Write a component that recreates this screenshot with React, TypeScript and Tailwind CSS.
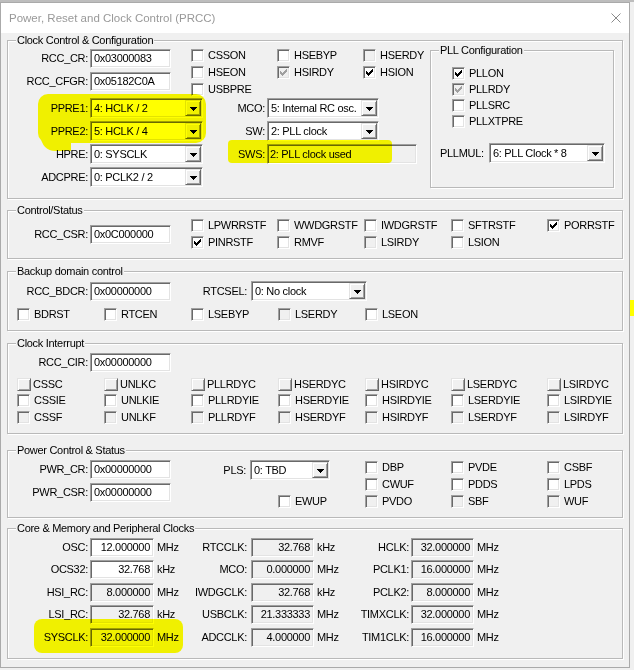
import React from "react";

type CbState = "off" | "on" | "dis" | "disOn" | "btn";

const sunken =
  "border border-t-[#a0a0a0] border-l-[#a0a0a0] border-b-white border-r-white shadow-[inset_1px_1px_0_#696969,inset_-1px_-1px_0_#e3e3e3]";
const raised =
  "border border-t-[#e3e3e3] border-l-[#e3e3e3] border-b-[#696969] border-r-[#696969] shadow-[inset_1px_1px_0_#fff,inset_-1px_-1px_0_#a0a0a0]";

function Tick({ color }: { color: string }) {
  return (
    <svg width="7" height="7" viewBox="0 0 7 7" shapeRendering="crispEdges" fill={color}>
      <path d="M6 0h1v1H6z M5 1h2v1H5z M0 2h1v1H0z M4 2h3v1H4z M0 3h2v1H0z M3 3h3v1H3z M0 4h5v1H0z M1 5h3v1H1z M2 6h1v1H2z" />
    </svg>
  );
}

function Check({ label, s = "off", w = "" }: { label: string; s?: CbState; w?: string }) {
  return (
    <div className={`flex items-center h-[13px] shrink-0 ${w}`}>
      {s === "btn" ? (
        <span className={`w-[14px] h-[13px] shrink-0 bg-[#f0f0f0] ${raised}`} />
      ) : (
        <span
          className={`w-[13px] h-[13px] shrink-0 flex items-center justify-center ${sunken} ${
            s === "off" || s === "on" ? "bg-white" : "bg-[#f0f0f0]"
          }`}
        >
          {s === "on" && <Tick color="#000" />}
          {s === "disOn" && <Tick color="#a0a0a0" />}
        </span>
      )}
      <span className={`whitespace-nowrap ${s === "btn" ? "ml-[2px]" : "ml-[4px]"}`}>{label}</span>
    </div>
  );
}

function Edit({ v, w, gray, right }: { v: string; w: string; gray?: boolean; right?: boolean }) {
  return (
    <div
      className={`${w} h-[19px] shrink-0 ${sunken} ${gray ? "bg-[#f0f0f0]" : "bg-white"} flex items-center px-[3px] whitespace-nowrap ${
        right ? "justify-end" : ""
      }`}
    >
      {v}
    </div>
  );
}

function Combo({ v, w }: { v: string; w: string }) {
  return (
    <div className={`${w} h-[20px] shrink-0 p-[1px] ${sunken} bg-white flex items-center`}>
      <span className="flex-1 pl-[2px] whitespace-nowrap overflow-hidden">{v}</span>
      <span className={`w-[16px] h-[16px] shrink-0 bg-[#f0f0f0] ${raised} flex items-center justify-center`}>
        <svg width="7" height="4" viewBox="0 0 7 4" shapeRendering="crispEdges" className="mt-[1px]">
          <path d="M0 0h7v1H0z M1 1h5v1H1z M2 2h3v1H2z M3 3h1v1H3z" fill="#000" />
        </svg>
      </span>
    </div>
  );
}

function Lbl({ t, w, mr = "mr-[2px]" }: { t: string; w: string; mr?: string }) {
  return <span className={`${w} ${mr} shrink-0 text-right whitespace-nowrap`}>{t}</span>;
}

function Group({ title, className = "", children }: { title: string; className?: string; children?: React.ReactNode }) {
  return (
    <div className={`relative border border-[#b9b9b9] shadow-[inset_1px_1px_0_#fff,1px_1px_0_#fff] ${className}`}>
      <span className="absolute left-[8px] -top-[7px] px-[1px] bg-[#f0f0f0] leading-[13px] whitespace-nowrap">
        {title}
      </span>
      {children}
    </div>
  );
}

const clocks: [string, string, string, boolean][][] = [
  [
    ["OSC:", "12.000000", "MHz", false],
    ["RTCCLK:", "32.768", "kHz", true],
    ["HCLK:", "32.000000", "MHz", true],
  ],
  [
    ["OCS32:", "32.768", "kHz", false],
    ["MCO:", "0.000000", "MHz", true],
    ["PCLK1:", "16.000000", "MHz", true],
  ],
  [
    ["HSI_RC:", "8.000000", "MHz", true],
    ["IWDGCLK:", "32.768", "kHz", true],
    ["PCLK2:", "8.000000", "MHz", true],
  ],
  [
    ["LSI_RC:", "32.768", "kHz", true],
    ["USBCLK:", "21.333333", "MHz", true],
    ["TIMXCLK:", "32.000000", "MHz", true],
  ],
  [
    ["SYSCLK:", "32.000000", "MHz", true],
    ["ADCCLK:", "4.000000", "MHz", true],
    ["TIM1CLK:", "16.000000", "MHz", true],
  ],
];
const rowGaps = ["", "mt-[3px]", "mt-[4px]", "mt-[3px]", "mt-[4px]"];

const cirCols = ["w-[87px]", "w-[87px]", "w-[87px]", "w-[87px]", "w-[86px]", "w-[96px]", "w-[60px]"];
const cirNames = ["CSS", "UNLK", "PLLRDY", "HSERDY", "HSIRDY", "LSERDY", "LSIRDY"];

export default function App() {
  return (
    <div className="relative w-[634px] h-[670px] overflow-hidden bg-[#f0f0f0] font-['Liberation_Sans',Arial,sans-serif] text-[11px] leading-[13px] tracking-[-0.3px] text-black">
      <div className="h-[2px] bg-[#bdbdbd]" />
      <div className="w-[630px] h-[666px] border border-[#aaaaaa] bg-[#f0f0f0]">
        {/* title bar */}
        <div className="h-[30px] bg-white flex items-center pl-[8px] pr-[8px] text-[11.5px] tracking-normal text-[#999999]">
          <span>Power, Reset and Clock Control (PRCC)</span>
          <svg className="ml-auto" width="10" height="10" viewBox="0 0 10 10">
            <path d="M0.5 0.5L9.5 9.5M9.5 0.5L0.5 9.5" stroke="#8a8a8a" strokeWidth="1" />
          </svg>
        </div>

        <div className="px-[6px] pt-[7px]">
          {/* Clock Control & Configuration */}
          <Group title="Clock Control & Configuration" className="h-[159px] flex">
            <div className="w-[422px] pt-[8px]">
              <div className="flex h-[49px]">
                <div className="flex flex-col gap-[4px]">
                  <div className="flex items-center">
                    <Lbl t="RCC_CR:" w="w-[80px]" />
                    <Edit v="0x03000083" w="w-[81px]" />
                  </div>
                  <div className="flex items-center">
                    <Lbl t="RCC_CFGR:" w="w-[80px]" />
                    <Edit v="0x05182C0A" w="w-[81px]" />
                  </div>
                </div>
                <div className="ml-[20px] flex">
                  <div className="w-[86px] flex flex-col gap-[4px]">
                    <Check label="CSSON" />
                    <Check label="HSEON" />
                    <Check label="USBPRE" />
                  </div>
                  <div className="w-[86px] flex flex-col gap-[4px]">
                    <Check label="HSEBYP" />
                    <Check label="HSIRDY" s="disOn" />
                  </div>
                  <div className="flex flex-col gap-[4px]">
                    <Check label="HSERDY" s="dis" />
                    <Check label="HSION" s="on" />
                  </div>
                </div>
              </div>
              <div className="flex">
                <div className="flex flex-col gap-[3px]">
                  {[
                    ["PPRE1:", "4: HCLK / 2"],
                    ["PPRE2:", "5: HCLK / 4"],
                    ["HPRE:", "0: SYSCLK"],
                    ["ADCPRE:", "0: PCLK2 / 2"],
                  ].map(([l, v]) => (
                    <div key={l} className="flex items-center">
                      <Lbl t={l} w="w-[80px]" />
                      <Combo v={v} w="w-[113px]" />
                    </div>
                  ))}
                </div>
                <div className="flex flex-col gap-[3px]">
                  <div className="flex items-center">
                    <Lbl t="MCO:" w="w-[62px]" />
                    <Combo v="5: Internal RC osc." w="w-[112px]" />
                  </div>
                  <div className="flex items-center">
                    <Lbl t="SW:" w="w-[62px]" />
                    <Combo v="2: PLL clock" w="w-[112px]" />
                  </div>
                  <div className="flex items-center h-[20px]">
                    <Lbl t="SWS:" w="w-[62px]" />
                    <div className={`w-[150px] h-[20px] ${sunken} bg-[#f0f0f0] flex items-center px-[2px] whitespace-nowrap`}>
                      2: PLL clock used
                    </div>
                  </div>
                </div>
              </div>
            </div>
            <Group title="PLL Configuration" className="w-[184px] h-[138px] mt-[9px]">
              <div className="pt-[16px]">
                <div className="pl-[21px] flex flex-col gap-[3px]">
                  <Check label="PLLON" s="on" />
                  <Check label="PLLRDY" s="disOn" />
                  <Check label="PLLSRC" />
                  <Check label="PLLXTPRE" />
                </div>
                <div className="pl-[9px] mt-[15px] flex items-center">
                  <span className="w-[49px] shrink-0">PLLMUL:</span>
                  <Combo v="6: PLL Clock * 8" w="w-[116px]" />
                </div>
              </div>
            </Group>
          </Group>

          {/* Control/Status */}
          <Group title="Control/Status" className="h-[49px] mt-[11px]">
            <div className="flex pt-[8px]">
              <div className="flex items-center mt-[1px]">
                <Lbl t="RCC_CSR:" w="w-[80px]" />
                <Edit v="0x0C000000" w="w-[81px]" />
              </div>
              <div className="ml-[20px] flex">
                <div className="w-[86px] flex flex-col gap-[4px]">
                  <Check label="LPWRRSTF" />
                  <Check label="PINRSTF" s="on" />
                </div>
                <div className="w-[87px] flex flex-col gap-[4px]">
                  <Check label="WWDGRSTF" />
                  <Check label="RMVF" />
                </div>
                <div className="w-[87px] flex flex-col gap-[4px]">
                  <Check label="IWDGRSTF" />
                  <Check label="LSIRDY" s="dis" />
                </div>
                <div className="w-[96px] flex flex-col gap-[4px]">
                  <Check label="SFTRSTF" />
                  <Check label="LSION" />
                </div>
                <div className="flex flex-col gap-[4px]">
                  <Check label="PORRSTF" s="on" />
                </div>
              </div>
            </div>
          </Group>

          {/* Backup domain control */}
          <Group title="Backup domain control" className="h-[60px] mt-[12px]">
            <div className="pt-[9px]">
              <div className="flex items-center">
                <Lbl t="RCC_BDCR:" w="w-[80px]" />
                <Edit v="0x00000000" w="w-[81px]" />
                <Lbl t="RTCSEL:" w="w-[76px]" mr="mr-[4px]" />
                <Combo v="0: No clock" w="w-[116px]" />
              </div>
              <div className="flex pl-[9px] mt-[7px]">
                <Check label="BDRST" w="w-[87px]" />
                <Check label="RTCEN" w="w-[87px]" />
                <Check label="LSEBYP" w="w-[87px]" />
                <Check label="LSERDY" s="dis" w="w-[87px]" />
                <Check label="LSEON" />
              </div>
            </div>
          </Group>

          {/* Clock Interrupt */}
          <Group title="Clock Interrupt" className="h-[91px] mt-[12px]">
            <div className="pt-[9px]">
              <div className="flex items-center">
                <Lbl t="RCC_CIR:" w="w-[80px]" />
                <Edit v="0x00000000" w="w-[81px]" />
              </div>
              <div className="pl-[9px] mt-[6px]">
                <div className="flex">
                  {cirNames.map((n, i) => (
                    <Check key={n} label={n + "C"} s="btn" w={cirCols[i]} />
                  ))}
                </div>
                <div className="flex mt-[3px]">
                  {cirNames.map((n, i) => (
                    <Check key={n} label={n + "IE"} w={cirCols[i]} />
                  ))}
                </div>
                <div className="flex mt-[4px]">
                  {cirNames.map((n, i) => (
                    <Check key={n} label={n + "F"} s="dis" w={cirCols[i]} />
                  ))}
                </div>
              </div>
            </div>
          </Group>

          {/* Power Control & Status */}
          <Group title="Power Control & Status" className="h-[68px] mt-[16px]">
            <div className="flex pt-[9px]">
              <div className="flex flex-col gap-[4px]">
                <div className="flex items-center">
                  <Lbl t="PWR_CR:" w="w-[80px]" />
                  <Edit v="0x00000000" w="w-[81px]" />
                </div>
                <div className="flex items-center">
                  <Lbl t="PWR_CSR:" w="w-[80px]" />
                  <Edit v="0x00000000" w="w-[81px]" />
                </div>
              </div>
              <div className="w-[194px] shrink-0">
                <div className="flex items-center">
                  <Lbl t="PLS:" w="w-[75px]" mr="mr-[4px]" />
                  <Combo v="0: TBD" w="w-[80px]" />
                </div>
                <div className="pl-[107px] mt-[15px]">
                  <Check label="EWUP" />
                </div>
              </div>
              <div className="flex mt-[1px]">
                <div className="w-[86px] flex flex-col gap-[4px]">
                  <Check label="DBP" />
                  <Check label="CWUF" />
                  <Check label="PVDO" s="dis" />
                </div>
                <div className="w-[96px] flex flex-col gap-[4px]">
                  <Check label="PVDE" />
                  <Check label="PDDS" />
                  <Check label="SBF" s="dis" />
                </div>
                <div className="flex flex-col gap-[4px]">
                  <Check label="CSBF" />
                  <Check label="LPDS" />
                  <Check label="WUF" s="dis" />
                </div>
              </div>
            </div>
          </Group>

          {/* Core & Memory and Peripheral Clocks */}
          <Group title="Core & Memory and Peripheral Clocks" className="h-[131px] mt-[10px]">
            <div className="pt-[9px]">
              {clocks.map((row, ri) => (
                <div key={ri} className={`flex items-center ${rowGaps[ri]}`}>
                  <div className="w-[180px] flex items-center shrink-0">
                    <Lbl t={row[0][0]} w="w-[80px]" />
                    <Edit v={row[0][1]} w="w-[64px]" gray={row[0][3]} right />
                    <span className="ml-[3px]">{row[0][2]}</span>
                  </div>
                  <div className="w-[159px] flex items-center shrink-0">
                    <Lbl t={row[1][0]} w="w-[59px]" mr="mr-[4px]" />
                    <Edit v={row[1][1]} w="w-[63px]" gray={row[1][3]} right />
                    <span className="ml-[3px]">{row[1][2]}</span>
                  </div>
                  <div className="flex items-center">
                    <Lbl t={row[2][0]} w="w-[62px]" />
                    <Edit v={row[2][1]} w="w-[63px]" gray={row[2][3]} right />
                    <span className="ml-[3px]">{row[2][2]}</span>
                  </div>
                </div>
              ))}
            </div>
          </Group>
        </div>
      </div>

      {/* highlighter marks */}
      <div className="absolute left-[38px] top-[94px] w-[168px] h-[49px] rounded-[10px] bg-[#ffff00] mix-blend-multiply pointer-events-none" />
      <div className="absolute left-[41px] top-[128px] w-[30px] h-[23px] rounded-bl-[14px] bg-[#ffff00] mix-blend-multiply pointer-events-none" />
      <div className="absolute left-[228px] top-[140px] w-[164px] h-[23px] rounded-[4px] bg-[#ffff00] mix-blend-multiply pointer-events-none" />
      <div className="absolute left-[34px] top-[619px] w-[149px] h-[34px] rounded-[8px] bg-[#ffff00] mix-blend-multiply pointer-events-none" />
      <div className="absolute left-[630px] top-[300px] w-[4px] h-[16px] bg-[#ffff00] pointer-events-none" />
    </div>
  );
}
